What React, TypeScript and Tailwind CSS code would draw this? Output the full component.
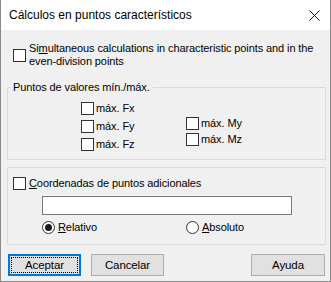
import React from 'react'

function CheckBox() {
  return <span className="block w-[13px] h-[13px] shrink-0 border border-[#333333] bg-white" />
}

function Radio({ checked }: { checked?: boolean }) {
  return (
    <span className="flex items-center justify-center w-[13px] h-[13px] shrink-0 rounded-full border border-[#333333] bg-white">
      {checked && <span className="block w-[7px] h-[7px] rounded-full bg-[#1a1a1a]" />}
    </span>
  )
}

function CheckRow({ label, className = '' }: { label: string; className?: string }) {
  return (
    <div className={`flex items-center gap-[2px] ${className}`}>
      <CheckBox />
      <span>{label}</span>
    </div>
  )
}

export default function App() {
  return (
    <div className="w-[331px] h-[282px] flex flex-col bg-[#f0f0f0] border-x border-b border-[#8a8a8a] text-[11px] tracking-[-0.1px] leading-[13px] text-black whitespace-nowrap font-['Segoe_UI','Liberation_Sans',sans-serif] overflow-hidden">
      {/* title bar */}
      <div className="h-[30px] shrink-0 bg-white flex items-center justify-between pl-[8px] pr-[10px]">
        <span className="text-[12px] tracking-normal pt-[1px]">Cálculos en puntos característicos</span>
        <svg width="11" height="11" viewBox="0 0 11 11" className="mt-[1px]">
          <path d="M0.5 0.5 L10.5 10.5 M10.5 0.5 L0.5 10.5" stroke="#111" strokeWidth="1" />
        </svg>
      </div>

      <div className="flex flex-col pl-[6px]">
        {/* simultaneous option */}
        <div className="flex items-center gap-[3px] mt-[12px] ml-[6px]">
          <CheckBox />
          <span>
            Si<span className="underline">m</span>ultaneous calculations in characteristic points and in the
            <br />
            even-division points
          </span>
        </div>

        {/* min / max group */}
        <fieldset className="mt-[13px] w-[319px] h-[79px] border border-[#dcdcdc]">
          <legend className="ml-[2px] px-[3px]">Puntos de valores mín./máx.</legend>
          <div className="flex">
            <div className="flex flex-col ml-[73px] w-[105px] mt-[5px]">
              <CheckRow label="máx. Fx" className="h-[18px]" />
              <CheckRow label="máx. Fy" className="h-[18px]" />
              <CheckRow label="máx. Fz" className="h-[18px]" />
            </div>
            <div className="flex flex-col mt-[21px]">
              <CheckRow label="máx. My" className="h-[16px]" />
              <CheckRow label="máx. Mz" className="h-[16px]" />
            </div>
          </div>
        </fieldset>

        {/* additional points group */}
        <fieldset className="mt-[7px] w-[319px] h-[78px] border border-[#dcdcdc]">
          <div className="flex items-center gap-[3px] mt-[9px] ml-[5px]">
            <CheckBox />
            <span>
              <span className="underline">C</span>oordenadas de puntos adicionales
            </span>
          </div>
          <div className="ml-[34px] mt-[6px] w-[250px] h-[19px] border border-[#7a7a7a] bg-white" />
          <div className="flex ml-[34px] mt-[6px]">
            <div className="flex items-center gap-[3px] w-[144px]">
              <Radio checked />
              <span>
                <span className="underline">R</span>elativo
              </span>
            </div>
            <div className="flex items-center gap-[3px]">
              <Radio />
              <span>
                <span className="underline">A</span>bsoluto
              </span>
            </div>
          </div>
        </fieldset>

        {/* buttons */}
        <div className="flex mt-[9px] ml-[1px] text-[11.5px]">
          <button className="w-[73px] h-[22px] border-2 border-[#0078d7] bg-[#e1e1e1] p-[1px]">
            <span className="flex items-center justify-center w-full h-full border border-dotted border-black">
              Aceptar
            </span>
          </button>
          <button className="ml-[10px] w-[73px] h-[22px] border border-[#adadad] bg-[#e1e1e1]">Cancelar</button>
          <button className="ml-[87px] w-[74px] h-[22px] border border-[#adadad] bg-[#e1e1e1]">Ayuda</button>
        </div>
      </div>
    </div>
  )
}
